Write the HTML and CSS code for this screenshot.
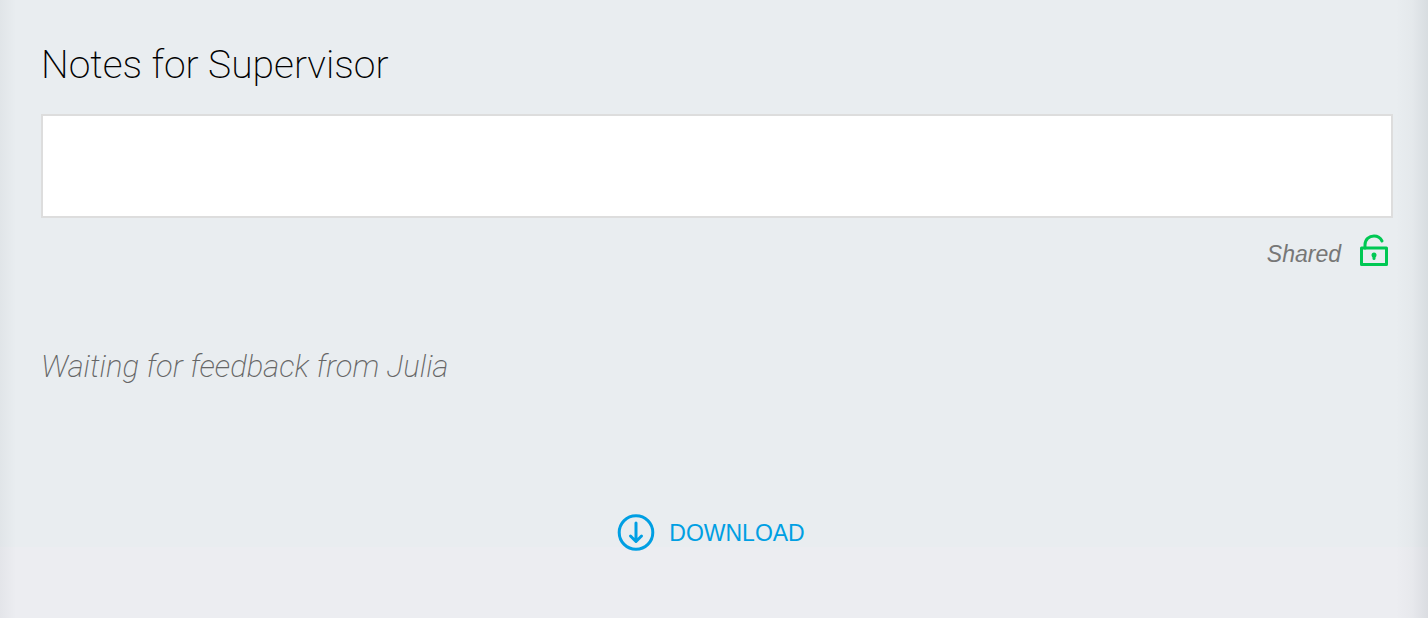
FILE: index.html
```html
<!DOCTYPE html>
<html lang="en">
<head>
    <meta charset="UTF-8">
    <meta name="viewport" content="width=device-width, initial-scale=1.0">
    <title>Notes for Supervisor</title>
    <link rel="stylesheet" href="styles.css">
</head>
<body>
    <main class="page">
        <section class="notes">
            <h1><label for="notes">Notes for Supervisor</label></h1>
            <textarea id="notes" class="notes-input"></textarea>
            <div class="sharing">
                <span>Shared</span>
                <svg class="lock" viewBox="0 0 30 34" aria-hidden="true">
                    <rect x="2.500" y="14" width="25" height="16.500" />
                    <path d="M6 14V11C6 5.500 10 2 15 2c3.500 0 6.500 2 8 5" />
                    <circle class="keyhole" cx="15" cy="21" r="2.500" />
                    <path d="M15 21V24.500" />
                </svg>
            </div>
        </section>

        <p class="feedback">Waiting for feedback from Julia</p>

        <footer class="actions">
            <button type="button" class="download">
                <svg viewBox="0 0 38 38" aria-hidden="true">
                    <circle cx="19" cy="18.500" r="16.800" />
                    <path d="M19 9V26.500M13.500 22L19 27.500L24.500 22" />
                </svg>
                <span>DOWNLOAD</span>
            </button>
        </footer>
    </main>
</body>
</html>
```

FILE: styles.css
```css
* {
    box-sizing: border-box;
}

body {
    margin: 0;
    min-height: 100vh;
    font-family: "Liberation Sans", Arial, sans-serif;
    background: linear-gradient(to bottom, #e9edf0 calc(100% - 71px), #ecedf1 calc(100% - 71px));
}

.page {
    min-height: 100vh;
    padding: 40px 35px 0 41px;
    background:
        linear-gradient(to right, rgba(90, 100, 110, 0.06), transparent 16px),
        linear-gradient(to left, rgba(90, 100, 110, 0.12), rgba(90, 100, 110, 0.03) 16px, transparent 32px);
}

h1 {
    margin: 0 0 24px;
    font-family: Roboto, sans-serif;
    font-size: 39px;
    font-weight: 200;
    line-height: 50px;
    color: #000;
}

.notes-input {
    display: block;
    width: 100%;
    height: 104px;
    padding: 16px;
    border: 2px solid #ddd;
    border-radius: 0;
    outline: none;
    background: #fff;
    font: 23px "Liberation Sans", Arial, sans-serif;
    resize: none;
}

.sharing {
    display: flex;
    justify-content: flex-end;
    align-items: flex-end;
    gap: 18px;
    margin-top: 16px;
    padding-right: 4px;
    font-size: 23px;
    font-style: italic;
    line-height: 28px;
    color: #777;
}

.lock {
    width: 30px;
    height: 34px;
    fill: none;
    stroke: #00c853;
    stroke-width: 3;
    stroke-linecap: round;
    stroke-linejoin: round;
}

.lock .keyhole {
    fill: #00c853;
    stroke: none;
}

.feedback {
    margin: 80px 0 0;
    font-family: Roboto, sans-serif;
    font-size: 31px;
    font-style: italic;
    font-weight: 200;
    line-height: 38px;
    color: #666;
}

.actions {
    display: flex;
    justify-content: center;
    margin-top: 128px;
    padding-right: 12px;
}

.download {
    display: flex;
    align-items: center;
    gap: 14px;
    padding: 0;
    border: none;
    background: none;
    font: 23px "Liberation Sans", Arial, sans-serif;
    color: #009fe3;
    cursor: pointer;
}

.download svg {
    width: 38px;
    height: 38px;
    fill: none;
    stroke: currentColor;
    stroke-width: 3;
    stroke-linecap: round;
    stroke-linejoin: round;
}
```
